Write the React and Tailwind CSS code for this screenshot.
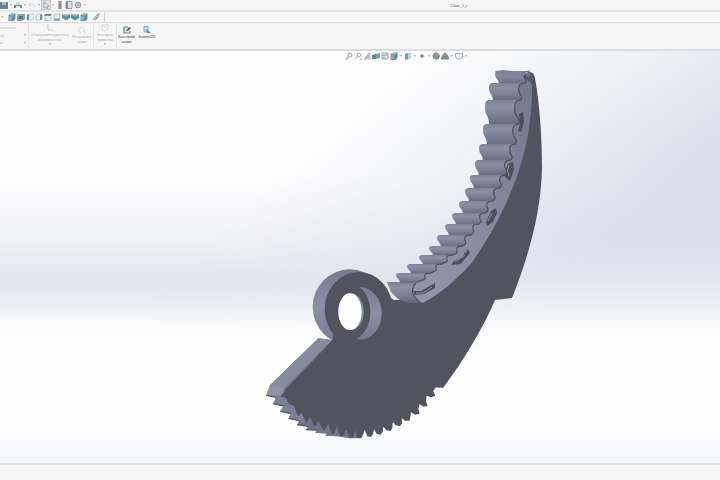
import clsx from 'clsx';

const QUICK_TOOLS = [
  { name: 'Save', icon: 'save', menu: true },
  { name: 'Print', icon: 'print', menu: true },
  { name: 'Undo', icon: 'undo', menu: true },
  { name: 'Select', icon: 'cursor', menu: true, active: true },
  { name: 'Rebuild', icon: 'traffic' },
  { name: 'File properties', icon: 'sheet' },
  { name: 'Options', icon: 'gear', menu: true },
];

const VIEW_TOOLS = [
  { name: 'Isometric', icon: 'cube' },
  { name: 'Front', icon: 'cubeDark' },
  { name: 'Back', icon: 'cubeLeft' },
  { name: 'Left', icon: 'cubeRight' },
  { name: 'Right', icon: 'cubeTop' },
  { name: 'Top', icon: 'cubeOpen' },
  { name: 'Bottom', icon: 'shield' },
  { name: 'Trimetric', icon: 'shield' },
  { name: 'Dimetric', icon: 'cube' },
];

const HUD_TOOLS = [
  { name: 'Zoom to fit', icon: 'zoom' },
  { name: 'Zoom to area', icon: 'zoomArea' },
  { name: 'Previous view', icon: 'pen' },
  { name: 'Section view', icon: 'section' },
  { name: 'Annotations', icon: 'sheetTeal' },
  { name: 'View orientation', icon: 'cube', menu: true },
  { name: 'Display style', icon: 'display', menu: true },
  { name: 'Hide or show items', icon: 'eye', menu: true },
  { name: 'Edit appearance', icon: 'ball' },
  { name: 'Apply scene', icon: 'scene', menu: true },
  { name: 'View settings', icon: 'monitor', menu: true },
];

// left x, right x and top y of every rib on the inner rim
const RIBS = [
  [495, 524, 71],
  [489, 519, 83],
  [485, 515, 100],
  [483, 513, 124],
  [479, 510, 144],
  [475, 505, 160],
  [470, 500, 175],
  [465, 494, 188],
  [459, 487, 201],
  [452, 480, 213],
  [445, 473, 224],
  [437, 465, 235],
  [429, 457, 246],
  [419, 447, 255],
  [407, 436, 264],
  [396, 425, 273],
  [386, 412, 282],
];

const SHAPES = {
  save: (
    <>
      <path d="M0 1h8v7H0z" fill="#41677a" />
      <path d="M2 1h4v3H2z" fill="#8fb4c2" />
    </>
  ),
  print: (
    <>
      <path d="M2 1h4l1 3H1z" fill="#bed4da" />
      <path d="M0 4h8v3H0z" fill="#4c7585" />
      <path d="M2 5h4v2H2z" fill="#dbe7e9" />
    </>
  ),
  undo: <path d="M2 2L1 4l2 1M1 4c3-2 5-1 6 2" fill="none" stroke="#c9cdd0" />,
  cursor: <path d="M2 1l5 4-2 .3L6 8l-1 .2L4 5.800 2 7z" fill="#eee" stroke="#77808a" strokeWidth=".7" />,
  traffic: (
    <>
      <path d="M2.500 0h3v8h-3z" fill="#6d6761" />
      <circle cx="4" cy="2" r="1" fill="#c7685b" />
      <circle cx="4" cy="6" r="1" fill="#66a077" />
    </>
  ),
  sheet: (
    <>
      <path d="M1 .5h6v7H1z" fill="#d3dde1" stroke="#65747d" strokeWidth=".8" />
      <path d="M1 1h2v6H1z" fill="#65747d" />
    </>
  ),
  gear: (
    <>
      <circle cx="4" cy="4" r="2.600" fill="#d5d8db" stroke="#858b91" strokeWidth="1.200" />
      <circle cx="4" cy="4" r="1" fill="#858b91" />
    </>
  ),
  cube: (
    <>
      <path d="M.5 2l3-1.500h4V6l-2 2h-5z" fill="#347488" />
      <path d="M.5 2l3-1.500h4L5 2.500z" fill="#8fb9c5" />
      <path d="M1 3h3v4H1z" fill="#5f9dae" />
    </>
  ),
  cubeDark: (
    <>
      <path d="M1 1h7v5L5 8H0V3z" fill="#6b919e" />
      <path d="M2 3h4v3H1z" fill="#27596c" />
    </>
  ),
  cubeLeft: (
    <>
      <path d="M1 2l3-1h4v5L6 7H1z" fill="#e8eef0" stroke="#92a4ac" strokeWidth=".7" />
      <path d="M1 2l2-1v6H1z" fill="#477889" />
    </>
  ),
  cubeRight: (
    <>
      <path d="M1 2l2-1h4v5L5 7H1z" fill="#e8eef0" stroke="#92a4ac" strokeWidth=".7" />
      <path d="M5 2l2-1v5L5 7.500z" fill="#477889" />
    </>
  ),
  cubeTop: (
    <>
      <path d="M1 2l1-1h5v5L6 7.500H1z" fill="#e8eef0" stroke="#8298a1" strokeWidth=".7" />
      <path d="M0 3l1-2h7L6 3z" fill="#477889" />
    </>
  ),
  cubeOpen: (
    <>
      <path d="M1 2l1-1h5v5L6 7H1z" fill="#e8eef0" stroke="#8298a1" strokeWidth=".7" />
      <path d="M0 7.500l2-2h5L6 8z" fill="#658b99" />
    </>
  ),
  shield: (
    <>
      <path d="M0 1.500h8V5L4 7.500 0 5z" fill="#347488" />
      <path d="M1 2h6L4 4z" fill="#7bb1c0" />
    </>
  ),
  clip: <path d="M1 7L5 2l2-1-1 3-3 3 2-3" fill="none" stroke="#80868a" strokeWidth="1.100" />,
  zoom: (
    <>
      <circle cx="5" cy="3" r="2" fill="#e6edf0" stroke="#7e8c94" />
      <path d="M3.500 4.500L1 7.500" stroke="#7e8c94" strokeWidth="1.200" />
    </>
  ),
  zoomArea: (
    <>
      <circle cx="5" cy="3" r="1.800" fill="#edf3f4" stroke="#8d999f" />
      <path d="M3.500 4.500L1 7.500M6 7h2V5" fill="none" stroke="#8d999f" />
    </>
  ),
  pen: <path d="M1 7h6M2 6l4-5 1 1-3 4zM5 5h2v2" fill="#bdcad0" stroke="#718592" strokeWidth=".8" />,
  section: (
    <>
      <path d="M0 3l4-1v5H0z" fill="#34687c" />
      <path d="M4 2l4-1v5L4 7z" fill="#5b8c9d" />
    </>
  ),
  sheetTeal: <path d="M1 1h6v6H1zM1 3h6M3 3v4" fill="#dde8ec" stroke="#71858f" strokeWidth=".9" />,
  display: (
    <>
      <path d="M1 2l2-1h4v5L5 7.500H1z" fill="#acccdc" />
      <path d="M1 2l3-1v6.500H1z" fill="#4688a3" />
    </>
  ),
  eye: (
    <>
      <path d="M1 4q3-4 6 0-3 4-6 0z" fill="#bfc8cd" />
      <circle cx="4" cy="4" r="1.400" fill="#56636b" />
    </>
  ),
  ball: (
    <>
      <circle cx="4" cy="4" r="3.500" fill="#518b75" />
      <path d="M4 .5a3.500 3.500 0 013.500 3.500H4z" fill="#bd6a5d" />
      <path d="M4 4h3.500A3.500 3.500 0 014 7.500z" fill="#526b95" />
    </>
  ),
  scene: (
    <>
      <path d="M1 3l3-3 3 3v2H1z" fill="#a07464" />
      <path d="M0 5q4-2 8 0v2.500H0z" fill="#57755f" />
    </>
  ),
  monitor: <path d="M.5 1.500h7V5L5.500 7h-3L.5 5z" fill="#f2f4f5" stroke="#84929b" strokeWidth=".9" />,
  relations: <path d="M2 0v6h6" fill="none" stroke="#b9bdc0" strokeWidth=".9" />,
  repair: <path d="M6 6a3 3 0 10-3 1M5 5l3 3" fill="none" stroke="#c8cbcd" strokeWidth=".9" />,
  snap: <path d="M1 1h6v3a3 3 0 01-6 0zM3 3h2" fill="none" stroke="#c8cbcd" strokeWidth=".9" />,
  sketch: (
    <>
      <path d="M5 1H1v6h6V5" fill="#dbe9ed" stroke="#377386" strokeWidth="1.200" />
      <path d="M3 5l3-4 2 1-3 3z" fill="#243f4b" />
    </>
  ),
  instant: (
    <>
      <path d="M1 0h4v6H1z" fill="#b7d1d9" stroke="#4c8091" strokeWidth=".8" />
      <path d="M3 3l5 4H4z" fill="#3a7386" />
    </>
  ),
};

function Icon({ name }) {
  return (
    <svg viewBox="0 0 8 8" className="size-2 shrink-0 opacity-80" aria-hidden="true">
      {SHAPES[name]}
    </svg>
  );
}

function Caret({ className }) {
  return (
    <svg viewBox="0 0 4 2" className={clsx('h-0.5 w-1 shrink-0', className)} aria-hidden="true">
      <path d="M1 0h2L2 2z" fill="#a3a8ab" />
    </svg>
  );
}

function ToolButton({ tool }) {
  return (
    <button type="button" aria-label={tool.name} className="flex items-center">
      <span className={clsx('flex', tool.active && 'bg-[#dfe2e4] outline outline-[#c3c7ca]')}>
        <Icon name={tool.icon} />
      </span>
      {tool.menu && <Caret className="ml-px" />}
    </button>
  );
}

function RibbonButton({ icon, lines, menu, disabled, className }) {
  return (
    <button
      type="button"
      disabled={disabled}
      className={clsx(
        'flex flex-col items-center text-[4px] leading-[5px] whitespace-nowrap',
        disabled ? 'text-[#aaadb0]' : 'text-[#33373a]',
        className
      )}
    >
      <Icon name={icon} />
      {lines.map((line) => (
        <span key={line}>{line}</span>
      ))}
      {menu && <Caret className="mt-px" />}
    </button>
  );
}

function Ribbon() {
  return (
    <section aria-label="Эскиз" className="flex h-7 border-b-2 border-[#dcdddd] bg-[#f6f6f6]">
      <div className="flex w-[29px] flex-col justify-between overflow-hidden border-r border-[#e5e5e5] pt-0.5 pr-px pb-1 text-[4px] leading-[5px] text-[#b4b7b9]">
        <span>объекты</span>
        <span className="flex items-center justify-between">
          ив <Caret />
        </span>
        <span className="flex items-center justify-between">
          ы <Caret />
        </span>
      </div>
      <div className="flex border-r border-[#e5e5e5] pt-px">
        <RibbonButton icon="relations" lines={['Отобразить/удалить', 'взаимосвязи']} menu disabled className="w-[42px]" />
        <RibbonButton icon="repair" lines={['Исправить', 'эскиз']} disabled className="w-[22px] pt-0.5" />
      </div>
      <div className="border-r border-[#e5e5e5] pt-px">
        <RibbonButton icon="snap" lines={['Быстрые', 'привязки']} menu disabled className="w-[22px]" />
      </div>
      <div className="flex pt-[3px]">
        <RibbonButton icon="sketch" lines={['Быстрый', 'эскиз']} className="w-[19px]" />
        <RibbonButton icon="instant" lines={['Instant2D']} className="w-[22px]" />
      </div>
    </section>
  );
}

function Backdrop() {
  return (
    <svg viewBox="0 0 720 412" preserveAspectRatio="none" className="absolute inset-0 size-full" aria-hidden="true">
      <defs>
        <linearGradient id="floor" x2="0" y2="1">
          <stop offset="0" stopColor="#fefefe" />
          <stop offset=".3" stopColor="#fdfdfe" />
          <stop offset=".45" stopColor="#f2f3f8" />
          <stop offset=".56" stopColor="#e2e5ee" />
          <stop offset=".6" stopColor="#e7eaf1" />
          <stop offset=".66" stopColor="#fafbfc" />
          <stop offset=".75" stopColor="#fefefe" />
          <stop offset=".9" stopColor="#fdfdfe" />
          <stop offset="1" stopColor="#f5f7fa" />
        </linearGradient>
        <linearGradient id="sky" x2="0" y2="1">
          <stop offset="0" stopColor="#e0e4ee" />
          <stop offset=".2" stopColor="#dadfea" />
          <stop offset=".45" stopColor="#d9deea" />
          <stop offset=".55" stopColor="#e0e4ee" />
          <stop offset=".65" stopColor="#f5f6fa" stopOpacity=".8" />
          <stop offset=".72" stopColor="#fefefe" stopOpacity="0" />
        </linearGradient>
        <linearGradient id="fade" gradientUnits="userSpaceOnUse" x1="400" y1="0" x2="600" y2="200">
          <stop offset="0" stopColor="#000" />
          <stop offset=".5" stopColor="#666" />
          <stop offset="1" stopColor="#fff" />
        </linearGradient>
        <mask id="skyMask">
          <path d="M0 0h720v412H0z" fill="url(#fade)" />
        </mask>
      </defs>
      <path d="M0 0h720v412H0z" fill="url(#floor)" />
      <path d="M0 0h720v412H0z" fill="url(#sky)" mask="url(#skyMask)" />
    </svg>
  );
}

function ribPath([lx, rx, y], [nlx, nrx, ny]) {
  const h = ny - y;
  const footX = Math.max(nlx + 5, lx + 4);
  return [
    `M${lx + 4} ${y}`,
    `Q${lx} ${y} ${lx} ${y + h * 0.25}`,
    `Q${lx} ${y + h * 0.55} ${lx + 2} ${y + h * 0.65}`,
    `Q${lx + 4} ${y + h * 0.8} ${footX} ${ny + 1}`,
    `H${nrx + 6} V${ny}`,
    `C${nrx + 8} ${y + h * 0.8} ${rx + 2} ${y + h * 0.8} ${rx} ${y + h * 0.5}`,
    `C${rx - 1} ${y + h * 0.2} ${rx} ${y} ${rx + 6} ${y}Z`,
  ].join(' ');
}

function edgePath([, rx, y], [, nrx, ny]) {
  const h = ny - y;
  return `M${rx + 6} ${y} C${rx} ${y} ${rx - 1} ${y + h * 0.2} ${rx} ${y + h * 0.5} C${rx + 2} ${y + h * 0.8} ${nrx + 8} ${y + h * 0.8} ${nrx + 6} ${ny}`;
}

function ClawModel() {
  const pairs = RIBS.slice(0, -1).map((rib, i) => [rib, RIBS[i + 1]]);

  return (
    <svg viewBox="0 51 720 412" className="absolute inset-0 size-full" role="img" aria-label="Claw part">
      <defs>
        <linearGradient id="rib" x2="0" y2="1">
          <stop offset="0" stopColor="#7d8298" />
          <stop offset=".25" stopColor="#8b90a7" />
          <stop offset=".6" stopColor="#7b8096" />
          <stop offset="1" stopColor="#666a7f" />
        </linearGradient>
        <linearGradient id="rim" x1="1" y1="0" x2="0" y2="1">
          <stop offset="0" stopColor="#74788d" />
          <stop offset=".5" stopColor="#858aa1" />
          <stop offset="1" stopColor="#9297ad" />
        </linearGradient>
        <linearGradient id="hub" x2="0" y2="1">
          <stop offset="0" stopColor="#767b91" />
          <stop offset=".5" stopColor="#8c91a8" />
          <stop offset="1" stopColor="#74798f" />
        </linearGradient>
      </defs>

      {/* side faces of the sector and its gear teeth */}
      <g transform="translate(260 260) scale(.33333)">
        <path
          d="M175 235L30 376 19 406 48 412 40 431 71 438 61 454 93 461 86 475 118 482 111 494 144 499 138 509 172 510 165 518 200 521 195 527 230 529 270 535 302 535 320 450 217 240z"
          fill="#70758b"
        />
        <path d="M175 235L30 376 70 388 217 240z" fill="#868ba2" />
        <path d="M30 376L19 406 62 408 74 385z" fill="#8e93a9" />
        <path d="M48 412l30 2 10 20-17 4-31-7zM71 438l30-2 12 28-20-3-32-7zM93 461l30-3 12 27-17-3-32-7z" fill="#7c8197" />
        <path d="M19 406l29 6M40 431l31 7M61 454l32 7M86 475l32 7M111 494l33 5M138 509l34 1" stroke="#565967" strokeWidth="4" />
        <ellipse cx="270" cy="141" rx="112" ry="113" fill="url(#hub)" />
      </g>

      {/* front face */}
      <path
        d="M528 72Q534 71 535 78C540 106 542 140 542 168C541 213 529 255 512 298L495 300C483 328 464 360 443 388L436 387 360 432 300 398 285 390 332 341 350 275 394 300 414 300C475 245 505 170 524 76z"
        fill="#51535f"
      />
      <g transform="translate(260 260) scale(.33333)">
        <path
          d="M540 383L527 382 520 394 526 408 512 412 500 407 498 424 503 438 490 440 479 432 475 448 479 461 465 464 453 457 451 470 449 482 435 482 425 474 426 489 420 499 408 496 398 487 397 504 392 513 379 511 370 500 369 514 362 524 350 521 342 507 339 522 333 531 322 529 314 509 309 525 303 535 291 533 286 510 279 533 268 532 258 508 249 528 241 529 230 500 220 522 215 521 205 491 193 511 190 511 176 484 165 499 162 499 150 470 140 487 138 486 125 457 116 468 113 467 101 437 88 433 78 414 62 408 217 240 400 240z"
          fill="#51535f"
        />
        {/* hub bore */}
        <ellipse cx="296" cy="148" rx="102" ry="112" fill="#51535f" />
        <ellipse cx="300" cy="160" rx="65" ry="79" fill="url(#hub)" />
        <ellipse cx="268" cy="156" rx="63" ry="86" fill="#51535f" />
        <ellipse cx="273" cy="155" rx="38" ry="55" fill="#8b90a5" />
        <ellipse cx="270" cy="155" rx="35" ry="55" fill="#fcfcfd" />
      </g>

      {/* inner rim */}
      <path
        d="M522 73L531 74C533 90 532 110 528 135C520 178 500 224 470 265C457 279 440 294 423 303L410 298 410 282 432 268 468 232 495 185 508 130z"
        fill="url(#rim)"
      />
      <path d="M387 282H415Q410 291 419 303Q403 304 396 297L391 292z" fill="url(#rib)" />
      {pairs.map(([rib, next]) => (
        <g key={rib[2]}>
          <path d={ribPath(rib, next)} fill="url(#rib)" />
          <path d={edgePath(rib, next)} fill="none" stroke="#4e515f" strokeWidth="1.200" />
        </g>
      ))}
      <path d="M416 283Q410 289 414 296L420 303" fill="none" stroke="#51535f" strokeWidth="1.200" />
      <path d="M495 71L503 70 530 73 526 77 497 74z" fill="#7f8499" />
      <path d="M523 76l3-2 2 3 3-3 3 3-2 7z" fill="#555866" />
      <g fill="#4c4f5d">
        <path d="M519 114l4-2 1 10-3 10-3-1 2-7z" />
        <path d="M508 164l5-2 1 7-4 12-5-4 1-8z" />
        <path d="M491 211l5-3 1 5-4 9-6 4-1-4z" />
        <path d="M454 261l8-4 6-8 2 4-9 11-10 1z" />
        <path d="M413 291h8l14-8v5l-11 6-9 1z" />
      </g>
      <g fill="none" stroke="#8f94aa">
        <path d="M509 165q-3 6 0 11M488 221l4-8M455 262l10-7M416 293h7l9-6" />
      </g>
    </svg>
  );
}

export default function App() {
  return (
    <div className="flex min-h-screen flex-col bg-[#f6f6f6] font-['Liberation_Sans',sans-serif] text-[#4a4d50]">
      <header className="flex h-3 items-center border-b-2 border-[#e2e3e3]">
        <nav aria-label="Quick access" className="flex w-[198px] items-center gap-px">
          {QUICK_TOOLS.map((tool) => (
            <ToolButton key={tool.name} tool={tool} />
          ))}
        </nav>
        <h1 className="flex-1 text-center text-[4px] leading-[5px]">Claw_1_r</h1>
      </header>

      <nav aria-label="Standard views" className="flex h-[11px] border-b border-[#dcdddd] bg-[#f8f8f8]">
        <div className="flex items-center gap-1 border-r border-[#d2d4d5] pr-1">
          <Caret />
          <div className="flex items-center gap-px">
            {VIEW_TOOLS.map((tool) => (
              <ToolButton key={tool.name} tool={tool} />
            ))}
          </div>
          <ToolButton tool={{ name: 'Attach', icon: 'clip' }} />
        </div>
      </nav>

      <Ribbon />

      <main className="relative flex-1 overflow-hidden">
        <Backdrop />
        <ClawModel />
        <nav aria-label="View" className="absolute inset-x-0 top-px flex justify-center gap-px pl-[92px]">
          {HUD_TOOLS.map((tool) => (
            <ToolButton key={tool.name} tool={tool} />
          ))}
        </nav>
      </main>

      <footer className="h-[17px] border-t-2 border-[#dcdee1]" />
    </div>
  );
}
